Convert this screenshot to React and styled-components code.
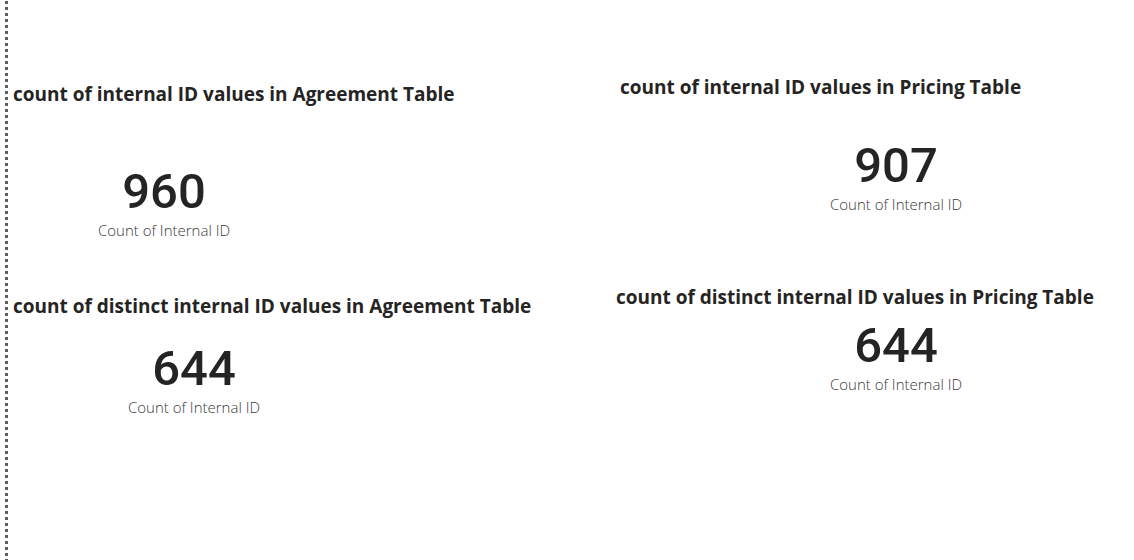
import React from "react";
import styled, { createGlobalStyle } from "styled-components";

const GlobalStyle = createGlobalStyle`
  * { box-sizing: border-box; }
  body {
    margin: 0;
    background: #ffffff;
    color: #252423;
    font-family: "Open Sans", "Segoe UI", sans-serif;
  }
`;

const Report = styled.main`
  display: flex;
  min-height: 100vh;
  padding-left: 5px;
`;

const DottedEdge = styled.div`
  flex: none;
  width: 3px;
  margin-right: 5px;
  background: repeating-linear-gradient(
    to bottom,
    transparent 0 1px,
    #605e5c 1px 4px,
    transparent 4px 6px
  );
`;

const Columns = styled.div`
  flex: 1;
  display: grid;
  grid-template-columns: 603fr 518fr;
`;

const Column = styled.div`
  display: flex;
  flex-direction: column;
  padding-top: ${(p) => p.$top}px;
`;

const Section = styled.section`
  display: flex;
  flex-direction: column;
  align-items: flex-start;
  gap: ${(p) => p.$gap}px;
  margin-bottom: ${(p) => p.$after || 0}px;
`;

const Title = styled.h2`
  margin: 0;
  padding-left: ${(p) => p.$inset || 0}px;
  font-size: 19px;
  line-height: 28px;
  font-weight: 700;
  white-space: nowrap;
`;

const Card = styled.div`
  width: 160px;
  margin-left: ${(p) => p.$indent}px;
  text-align: center;
`;

const Value = styled.div`
  font-family: Roboto, "DIN", sans-serif;
  font-size: 49px;
  line-height: 52px;
  font-weight: 500;
`;

const Label = styled.div`
  margin-top: 2px;
  color: #3b3a39;
  font-size: 15px;
  line-height: 20px;
  font-weight: 300;
  white-space: nowrap;
`;

function Metric({ title, value, indent, inset, gap, after }) {
  return (
    <Section $gap={gap} $after={after}>
      <Title $inset={inset}>{title}</Title>
      <Card $indent={indent}>
        <Value>{value}</Value>
        <Label>Count of Internal ID</Label>
      </Card>
    </Section>
  );
}

export default function App() {
  return (
    <>
      <GlobalStyle />
      <Report>
        <DottedEdge />
        <Columns>
          <Column $top={80}>
            <Metric title="count of internal ID values in Agreement Table" value="960" indent={71} gap={58} after={52} />
            <Metric title="count of distinct internal ID values in Agreement Table" value="644" indent={101} gap={23} />
          </Column>
          <Column $top={73}>
            <Metric title="count of internal ID values in Pricing Table" value="907" indent={200} inset={4} gap={39} after={69} />
            <Metric title="count of distinct internal ID values in Pricing Table" value="644" indent={200} gap={9} />
          </Column>
        </Columns>
      </Report>
    </>
  );
}
